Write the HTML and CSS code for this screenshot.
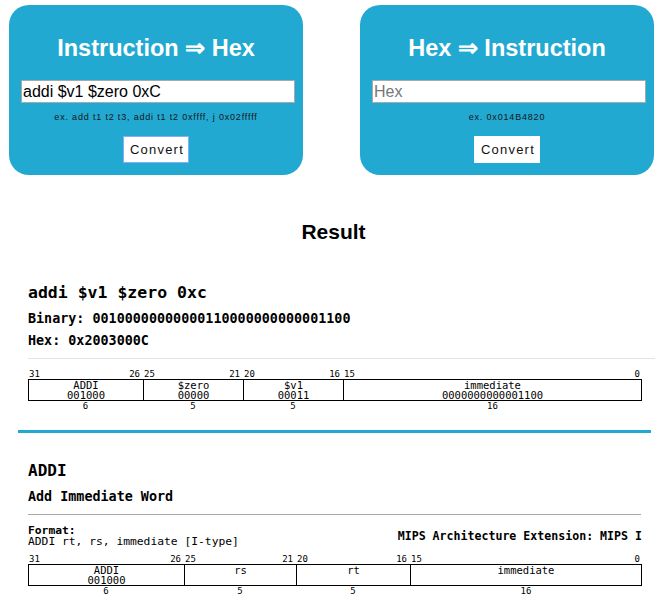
FILE: index.html
```html
<!DOCTYPE html>
<html lang="en">
<head>
<meta charset="utf-8">
<title>MIPS Converter</title>
<link rel="stylesheet" href="styles.css">
</head>
<body>
<div class="converters">
  <section class="card">
    <h2 class="card-title">Instruction ⇒ Hex</h2>
    <input class="card-input" type="text" value="addi $v1 $zero 0xC">
    <p class="card-hint">ex. add t1 t2 t3, addi t1 t2 0xffff, j 0x02fffff</p>
    <button class="card-btn card-btn-focus">Convert</button>
  </section>
  <section class="card">
    <h2 class="card-title">Hex ⇒ Instruction</h2>
    <input class="card-input" type="text" placeholder="Hex">
    <p class="card-hint">ex. 0x014B4820</p>
    <button class="card-btn">Convert</button>
  </section>
</div>

<h1 class="result-title">Result</h1>

<main class="result">
  <h3 class="instr">addi $v1 $zero 0xc</h3>
  <p class="mono-line first">Binary: 00100000000000110000000000001100</p>
  <p class="mono-line">Hex: 0x2003000C</p>
  <hr class="rule-thin">

  <div class="diagram d1">
    <div class="bitnums">
      <span class="seg"><span>31</span><span>26</span></span>
      <span class="seg"><span>25</span><span>21</span></span>
      <span class="seg"><span>20</span><span>16</span></span>
      <span class="seg"><span>15</span><span>0</span></span>
    </div>
    <div class="fields">
      <div class="field">ADDI<br>001000</div>
      <div class="field">$zero<br>00000</div>
      <div class="field">$v1<br>00011</div>
      <div class="field">immediate<br>0000000000001100</div>
    </div>
    <div class="widths">
      <span>6</span><span>5</span><span>5</span><span>16</span>
    </div>
  </div>

  <hr class="rule-blue">

  <h3 class="op">ADDI</h3>
  <p class="mono-line first">Add Immediate Word</p>
  <hr class="rule-gray">

  <div class="format-row">
    <div class="format"><b>Format:</b><br>ADDI rt, rs, immediate [I-type]</div>
    <div class="ext">MIPS Architecture Extension: MIPS I</div>
  </div>

  <div class="diagram d2">
    <div class="bitnums">
      <span class="seg"><span>31</span><span>26</span></span>
      <span class="seg"><span>25</span><span>21</span></span>
      <span class="seg"><span>20</span><span>16</span></span>
      <span class="seg"><span>15</span><span>0</span></span>
    </div>
    <div class="fields">
      <div class="field">ADDI<br>001000</div>
      <div class="field">rs</div>
      <div class="field">rt</div>
      <div class="field">immediate</div>
    </div>
    <div class="widths">
      <span>6</span><span>5</span><span>5</span><span>16</span>
    </div>
  </div>
</main>
</body>
</html>
```

FILE: styles.css
```css
* { box-sizing: border-box; }

html, body {
  margin: 0;
  padding: 0;
  background: #fff;
}

body {
  width: 667px;
  font-family: "Liberation Sans", Arial, sans-serif;
  color: #000;
}

.converters {
  display: flex;
  gap: 57px;
  padding: 5px 0 0 9px;
}

.card {
  width: 294px;
  height: 170px;
  background: #22a9d2;
  border-radius: 20px;
  padding: 30px 0 12px;
  display: flex;
  flex-direction: column;
  align-items: center;
  text-align: center;
}

.card-title {
  margin: 0;
  font-size: 23.5px;
  line-height: 26px;
  font-weight: bold;
  color: #fff;
}

.card-input {
  display: block;
  align-self: flex-start;
  margin: 19px 0 0 12px;
  width: 274px;
  height: 23px;
  border: 1px solid #a9a9a9;
  padding: 0 1px;
  font-family: "Liberation Sans", Arial, sans-serif;
  font-size: 16px;
  color: #000;
  background: #fff;
  outline: none;
}

.card-input::placeholder { color: #777; }

.card-hint {
  margin: 8px 0 0;
  font-size: 9px;
  line-height: 12px;
  letter-spacing: 0.82px;
  color: #161616;
}

.card-btn {
  margin-top: 13px;
  height: 27px;
  padding: 0 4px 0 6px;
  border: 1px solid #fff;
  background: #fff;
  font-family: "Liberation Sans", Arial, sans-serif;
  font-size: 13px;
  letter-spacing: 1.2px;
  color: #111;
}

.card-btn-focus { border-color: #86aef7; }

.result-title {
  margin: 45px 0 0;
  font-size: 21px;
  line-height: 24px;
  font-weight: bold;
  text-align: center;
}

.result {
  padding: 0 25px 0 28px;
  font-family: "DejaVu Sans Mono", monospace;
}

.instr, .op {
  margin: 0;
  font-weight: bold;
  line-height: 20px;
}

.instr { margin-top: 39px; font-size: 16.5px; }
.op { margin-top: 28px; font-size: 16px; }

.mono-line {
  margin: 6px 0 0;
  font-size: 13.4px;
  line-height: 16px;
  font-weight: bold;
}

.mono-line.first { margin-top: 8px; }

hr { border: 0; margin: 0; }

.rule-thin {
  margin: 9px -13px 0 0;
  height: 1px;
  background: #e4e4e4;
}

.rule-blue {
  margin: 19px -9px 0 -10px;
  height: 3px;
  background: #22a9d2;
}

.rule-gray {
  margin: 9px 1px 0 0;
  height: 1px;
  background: #a8a8a8;
}

.diagram { margin-top: 10px; }
.d2 { margin-top: 7px; }

.bitnums, .widths, .fields { display: grid; }

.d1 .bitnums, .d1 .widths { grid-template-columns: 115px 100px 100px 299px; }
.d1 .fields { grid-template-columns: 114px 100px 100px 298px; }
.d2 .bitnums, .d2 .widths { grid-template-columns: 156px 112px 114px 232px; }
.d2 .fields { grid-template-columns: 155px 112px 114px 231px; }

.bitnums, .widths {
  font-size: 9px;
  line-height: 10px;
}

.seg {
  display: flex;
  justify-content: space-between;
  padding: 0 3px 0 1px;
}

.seg:last-child { padding-right: 2px; }

.widths span { text-align: center; }

.fields {
  width: 614px;
  border: 1px solid #000;
}

.field {
  height: 20px;
  font-size: 10.5px;
  line-height: 10px;
  text-align: center;
  border-left: 1px solid #000;
}

.field:first-child { border-left: 0; }

.format-row {
  margin-top: 10px;
  display: flex;
  justify-content: space-between;
  align-items: center;
  width: 614px;
}

.format {
  font-size: 11.3px;
  line-height: 11px;
}

.ext {
  font-size: 11.6px;
  line-height: 14px;
  font-weight: bold;
}
```
